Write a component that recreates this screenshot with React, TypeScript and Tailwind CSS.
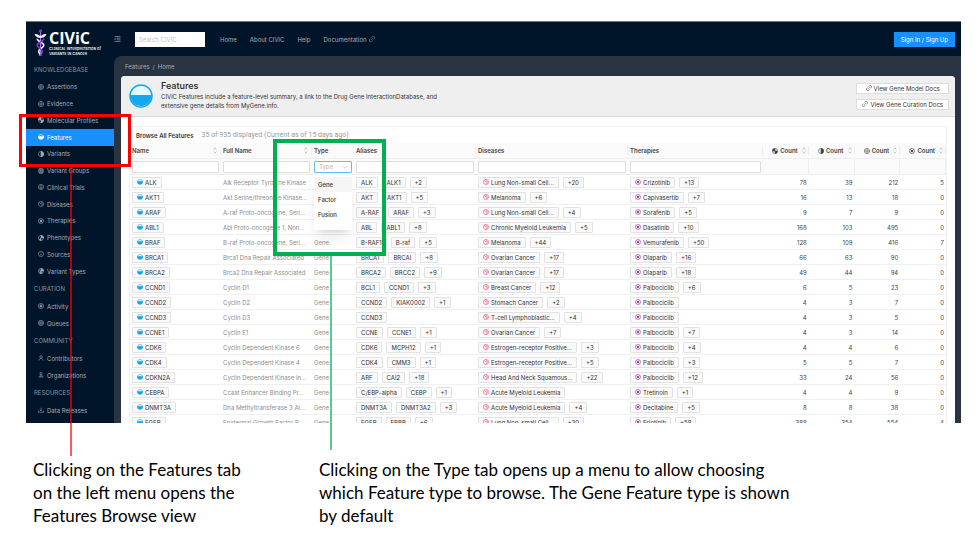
import React from "react";

type IconName =
  | "feature" | "assertion" | "evidence" | "profile" | "variant" | "group" | "trial" | "disease"
  | "therapy" | "phenotype" | "source" | "vtype" | "activity" | "queue" | "user" | "org" | "download";

const ring = <circle cx="8" cy="8" r="6.8" />;

const shapes: Record<IconName, React.ReactNode> = {
  feature: <>{ring}<path d="M1.2 6.500h13.6a6.8 6.8 0 0 1-13.6 0z" fill="currentColor" /></>,
  assertion: <>{ring}<circle cx="8" cy="8" r="3.6" /><path d="M6.4 8l1.2 1.2 2-2.4" /></>,
  evidence: <>{ring}<path d="M8 1v14M1 8h14" /></>,
  profile: <>{ring}<path d="M8 8V1.2A6.8 6.8 0 0 0 1.2 8zM8 8v6.8A6.8 6.8 0 0 0 14.8 8z" fill="currentColor" /></>,
  variant: <>{ring}<path d="M8 1.2a6.8 6.8 0 0 1 0 13.6z" fill="currentColor" /></>,
  group: <>{ring}<path d="M5 2v12M11 2v12M8 2v12" strokeWidth="2" /></>,
  trial: <>{ring}<path d="M3.5 8.5h9M5 11.5h6M5.5 5h5" /></>,
  disease: <>{ring}<path d="M8 8L4 4M8 4.5A3.5 3.5 0 0 1 8 11.500" /></>,
  therapy: <>{ring}<circle cx="8" cy="8" r="2.500" fill="currentColor" /><path d="M4 4l8 8M12 4l-8 8" strokeWidth="1.500" /></>,
  phenotype: <>{ring}<path d="M8 1.2a6.8 6.8 0 0 1 6.8 6.8H8zM8 8v6.8L3 12.5z" fill="currentColor" /></>,
  source: <>{ring}<path d="M8 4.5v1.6M8 7.5v4" strokeWidth="2" /></>,
  vtype: <>{ring}<path d="M8 1.2A6.8 6.8 0 0 1 14.8 8L8 8zM8 8l3 6-6 0.3z" fill="currentColor" /><path d="M3 5l5 3-5 3" /></>,
  activity: <>{ring}<path d="M8 4v8M4 8h8" strokeWidth="3" /></>,
  queue: <>{ring}<path d="M5.5 2v12M10.5 2v12M1.5 8h13" /></>,
  user: <><circle cx="8" cy="5" r="3.4" /><path d="M2.5 15c.5-4 2.5-6 5.500-6s5 2 5.500 6" /></>,
  org: <><circle cx="8" cy="4" r="2.800" /><path d="M3 15c0-4 2-7 5-7s5 3 5 7M6 15v-4h4v4" /></>,
  download: <><path d="M8 2v8M5 7.500l3 3 3-3M1.500 10v4h13v-4" /></>,
};

function Icon({ name, className = "" }: { name: IconName; className?: string }) {
  return (
    <svg viewBox="0 0 16 16" fill="none" stroke="currentColor" strokeWidth="1.5" aria-hidden="true"
      className={`size-[6px] shrink-0 ${className}`}>
      {shapes[name]}
    </svg>
  );
}

function LinkIcon() {
  return (
    <svg viewBox="0 0 16 16" fill="none" stroke="currentColor" strokeWidth="1.5" aria-hidden="true" className="size-[6px] shrink-0">
      <path d="M7 4l2-2a3.300 3.300 0 0 1 5 5l-2 2M9 12l-2 2a3.300 3.300 0 0 1-5-5l2-2M6 10l4-4" />
    </svg>
  );
}

function Helix() {
  return (
    <svg viewBox="0 0 14 30" fill="none" aria-hidden="true" className="h-[30px] w-[13px] shrink-0">
      <path d="M7 3v25" stroke="#a583e0" strokeWidth="1.200" />
      <circle cx="7" cy="2" r="1.800" fill="#7a35dd" />
      <path d="M0.500 5.500c3-1 4.500 1 6.500 2 2-1 3.500-3 6.500-2-1.500 3-4 4-6.500 4s-5-1-6.500-4z" fill="#efeafb" />
      <path d="M3.500 10.500c0 3.500 7 3.500 7 7s-5.500 3.500-5.500 6.500c0 2 2 2.500 2 5" stroke="#f4f1fb" strokeWidth="1.800" />
      <path d="M10.500 10.500c0 3.500-7 3.500-7 7s5.500 3.500 5.500 6.500c0 2-2 2.500-2 5" stroke="#7d3fdc" strokeWidth="1.800" />
    </svg>
  );
}

const menu: { title: string; items: [string, IconName][] }[] = [
  {
    title: "KNOWLEDGEBASE",
    items: [
      ["Assertions", "assertion"], ["Evidence", "evidence"], ["Molecular Profiles", "profile"],
      ["Features", "feature"], ["Variants", "variant"], ["Variant Groups", "group"],
      ["Clinical Trials", "trial"], ["Diseases", "disease"], ["Therapies", "therapy"],
      ["Phenotypes", "phenotype"], ["Sources", "source"], ["Variant Types", "vtype"],
    ],
  },
  { title: "CURATION", items: [["Activity", "activity"], ["Queues", "queue"]] },
  { title: "COMMUNITY", items: [["Contributors", "user"], ["Organizations", "org"]] },
  { title: "RESOURCES", items: [["Data Releases", "download"]] },
];

type Row = [string, string, string[], string[], string[], number[]];

const rows: Row[] = [
  ["ALK", "Alk Receptor Tyrosine Kinase", ["ALK", "ALK1", "+2"], ["Lung Non-small Cell...", "+20"], ["Crizotinib", "+13"], [78, 39, 212, 5]],
  ["AKT1", "Akt Serine/threonine Kinase...", ["AKT", "AKT1", "+5"], ["Melanoma", "+6"], ["Capivasertib", "+7"], [16, 13, 18, 0]],
  ["ARAF", "A-raf Proto-oncogene, Seri...", ["A-RAF", "ARAF", "+3"], ["Lung Non-small Cell...", "+4"], ["Sorafenib", "+5"], [9, 7, 9, 0]],
  ["ABL1", "Abl Proto-oncogene 1, Non...", ["ABL", "ABL1", "+8"], ["Chronic Myeloid Leukemia", "+5"], ["Dasatinib", "+10"], [168, 103, 495, 0]],
  ["BRAF", "B-raf Proto-oncogene, Seri...", ["B-RAF1", "B-raf", "+5"], ["Melanoma", "+44"], ["Vemurafenib", "+50"], [128, 109, 416, 7]],
  ["BRCA1", "Brca1 Dna Repair Associated", ["BRCA1", "BRCAI", "+8"], ["Ovarian Cancer", "+17"], ["Olaparib", "+16"], [66, 63, 90, 0]],
  ["BRCA2", "Brca2 Dna Repair Associated", ["BRCA2", "BRCC2", "+9"], ["Ovarian Cancer", "+17"], ["Olaparib", "+18"], [49, 44, 94, 0]],
  ["CCND1", "Cyclin D1", ["BCL1", "CCND1", "+3"], ["Breast Cancer", "+12"], ["Palbociclib", "+6"], [6, 5, 23, 0]],
  ["CCND2", "Cyclin D2", ["CCND2", "KIAK0002", "+1"], ["Stomach Cancer", "+2"], ["Palbociclib"], [4, 3, 7, 0]],
  ["CCND3", "Cyclin D3", ["CCND3"], ["T-cell Lymphoblastic...", "+4"], ["Palbociclib"], [4, 3, 5, 0]],
  ["CCNE1", "Cyclin E1", ["CCNE", "CCNE1", "+1"], ["Ovarian Cancer", "+7"], ["Palbociclib", "+7"], [4, 3, 14, 0]],
  ["CDK6", "Cyclin Dependent Kinase 6", ["CDK6", "MCPH12", "+1"], ["Estrogen-receptor Positive...", "+3"], ["Palbociclib", "+4"], [4, 4, 6, 0]],
  ["CDK4", "Cyclin Dependent Kinase 4", ["CDK4", "CMM3", "+1"], ["Estrogen-receptor Positive...", "+5"], ["Palbociclib", "+3"], [5, 5, 7, 0]],
  ["CDKN2A", "Cyclin Dependent Kinase In...", ["ARF", "CAI2", "+18"], ["Head And Neck Squamous...", "+22"], ["Palbociclib", "+12"], [33, 24, 56, 0]],
  ["CEBPA", "Ccaat Enhancer Binding Pr...", ["C/EBP-alpha", "CEBP", "+1"], ["Acute Myeloid Leukemia"], ["Tretinoin", "+1"], [4, 4, 9, 0]],
  ["DNMT3A", "Dna Methyltransferase 3 Al...", ["DNMT3A", "DNMT3A2", "+3"], ["Acute Myeloid Leukemia", "+4"], ["Decitabine", "+5"], [8, 8, 38, 0]],
  ["EGFR", "Epidermal Growth Factor R...", ["EGFR", "ERBB", "+6"], ["Lung Non-small Cell...", "+30"], ["Erlotinib", "+58"], [388, 354, 554, 4]],
];

function Chip({ label, icon, tone }: { label: string; icon?: IconName; tone?: string }) {
  return (
    <span className="flex h-[11px] items-center gap-[2px] rounded-[1px] border border-[#e2e2e2] bg-[#fafafa] px-1 text-[#333]">
      {icon && <Icon name={icon} className={tone} />}
      {label}
    </span>
  );
}

function Chips({ labels, icon, tone }: { labels: string[]; icon?: IconName; tone?: string }) {
  return (
    <div className="flex gap-1">
      {labels.map((l, i) => (
        <Chip key={l} label={l} icon={i === 0 ? icon : undefined} tone={tone} />
      ))}
    </div>
  );
}

function Sorter() {
  return (
    <svg viewBox="0 0 6 10" fill="none" stroke="#aaa" aria-hidden="true" className="h-[7px] w-[4px] shrink-0">
      <path d="M1 3.500l2-2.500 2 2.500M1 6.500l2 2.500 2-2.500" />
    </svg>
  );
}

const columns: { label: string; width: string; sort?: boolean }[] = [
  { label: "Name", width: "w-[91px]", sort: true },
  { label: "Full Name", width: "w-[91px]", sort: true },
  { label: "Type", width: "w-[42px]" },
  { label: "Aliases", width: "w-[122px]" },
  { label: "Diseases", width: "w-[152px]" },
  { label: "Therapies", width: "w-[135px]" },
];

const counts: IconName[] = ["profile", "variant", "evidence", "therapy"];

function TypeFilter() {
  return (
    <div className="relative">
      <select aria-label="Type" defaultValue="" className="block h-[12px] w-full appearance-none rounded-[1px] border border-[#69b9ff] bg-white px-1 leading-none text-[#b5b5b5]">
        <option value="">Type</option>
        <option>Gene</option>
        <option>Factor</option>
        <option>Fusion</option>
      </select>
      <svg viewBox="0 0 10 6" fill="none" stroke="#aaa" aria-hidden="true" className="absolute top-1 right-1 h-[4px] w-[6px]">
        <path d="M1 1l4 4 4-4" />
      </svg>
      <ul role="listbox" aria-label="Type options" className="absolute top-[13px] left-0 z-10 h-[56px] w-full bg-white pt-[3px] font-medium text-[#333] shadow-lg">
        <li role="option" aria-selected="true" className="flex h-[15px] items-center bg-[#f5f5f5] px-1">Gene</li>
        <li role="option" aria-selected="false" className="flex h-[15px] items-center px-1">Factor</li>
        <li role="option" aria-selected="false" className="flex h-[15px] items-center px-1">Fusion</li>
      </ul>
    </div>
  );
}

function FeatureTable() {
  return (
    <table className="w-full table-fixed border-separate border-spacing-0 whitespace-nowrap text-left">
      <thead className="bg-[#fafafa]">
        <tr className="h-4">
          {columns.map((c) => (
            <th key={c.label} scope="col" className={`border-b border-[#eee] pl-[2px] font-semibold text-[#444] ${c.width}`}>
              <div className="flex items-center justify-between border-r border-[#eee] pr-[3px]">
                {c.label}
                {c.sort && <Sorter />}
              </div>
            </th>
          ))}
          {counts.map((c) => (
            <th key={c} scope="col" className="border-b border-[#eee] font-semibold text-[#444]">
              <div className="flex items-center justify-end gap-[2px] border-r border-[#eee] pr-[2px]">
                <Icon name={c} />
                Count
                <span className="pl-[2px]"><Sorter /></span>
              </div>
            </th>
          ))}
        </tr>
        <tr className="h-4">
          {columns.map((c) => (
            <td key={c.label} className="border-b border-[#eee] px-[2px]">
              {c.label === "Type" ? (
                <TypeFilter />
              ) : (
                <input aria-label={`Filter ${c.label}`} className="block h-[12px] w-full rounded-[1px] border border-[#ddd] bg-white px-1" />
              )}
            </td>
          ))}
          {counts.map((c) => (
            <td key={c} className="border-r border-b border-[#eee]" />
          ))}
        </tr>
      </thead>
      <tbody>
        {rows.map(([name, full, aliases, diseases, therapies, nums]) => (
          <tr key={name} className="h-[15px]">
            <td className="border-b border-[#f0f0f0] px-[2px]"><div className="flex"><Chip label={name} icon="feature" tone="text-[#12a5ea]" /></div></td>
            <td className="border-b border-[#f0f0f0] px-[2px] text-[#8c8c8c]">{full}</td>
            <td className="border-b border-[#f0f0f0] px-[2px] text-[#8c8c8c]">Gene</td>
            <td className="border-b border-[#f0f0f0] px-[2px]"><Chips labels={aliases} /></td>
            <td className="border-b border-[#f0f0f0] px-[2px]"><Chips labels={diseases} icon="disease" tone="text-[#f0386b]" /></td>
            <td className="border-b border-[#f0f0f0] px-[2px]"><Chips labels={therapies} icon="therapy" tone="text-[#a8329c]" /></td>
            {nums.map((n, i) => (
              <td key={i} className="border-b border-[#f0f0f0] pr-[2px] text-right text-[#444]">{n}</td>
            ))}
          </tr>
        ))}
      </tbody>
    </table>
  );
}

function Sidebar() {
  return (
    <nav aria-label="Main menu" className="flex w-[88px] shrink-0 flex-col pt-1 pb-1 text-[#a6adb4]">
      {menu.map((g) => (
        <React.Fragment key={g.title}>
          <h2 className="flex flex-[10] items-center pl-2 text-[#8a939c]">{g.title}</h2>
          {g.items.map(([label, icon]) => (
            <a key={label} href="#" className={`flex flex-[9] items-center gap-[3px] pl-[12px] ${label === "Features" ? "bg-[#1890ff] text-white" : ""}`}>
              <Icon name={icon} />
              {label}
            </a>
          ))}
        </React.Fragment>
      ))}
    </nav>
  );
}

export default function App() {
  return (
    <div className="relative bg-white pt-[21px] pr-4 pb-2 pl-[26px] font-['Inter',sans-serif]">
      <div className="flex h-[402px] flex-col overflow-hidden border-t border-[#777] bg-[#001529] text-[6px] leading-[9px]">
        <header className="flex h-[34px] shrink-0 items-center pr-[6px] text-[#a6adb4]">
          <div className="flex w-[88px] items-center gap-[2px] pt-2 pl-2">
            <Helix />
            <div className="whitespace-nowrap text-white">
              <div className="font-['Open_Sans',sans-serif] text-[16px] leading-[16px] font-bold">CIViC</div>
              <div className="text-[4px] leading-[5px] font-medium [font-variant-caps:small-caps]">Clinical Interpretation of<br />Variants in Cancer</div>
            </div>
          </div>
          <button aria-label="Collapse menu">
            <svg viewBox="0 0 16 14" fill="none" stroke="currentColor" strokeWidth="1.500" className="h-[6px] w-[7px]">
              <path d="M1 1h14M6 5h9M6 9h9M1 13h14M4 5L1 7l3 2" />
            </svg>
          </button>
          <input aria-label="Search CIViC" placeholder="Search CIViC" className="ml-[14px] h-[15px] w-[70px] bg-white px-1 placeholder:text-[#bfbfbf]" />
          <nav aria-label="Site" className="flex gap-[13px] pl-[15px]">
            <a href="#">Home</a>
            <a href="#">About CIViC</a>
            <a href="#">Help</a>
            <a href="#" className="flex items-center gap-[2px]">Documentation <LinkIcon /></a>
          </nav>
          <button className="ml-auto h-[15px] bg-[#1890ff] px-[7px] text-white">Sign In / Sign Up</button>
        </header>
        <div className="flex min-h-0 flex-1">
          <Sidebar />
          <div className="flex min-w-0 flex-1 flex-col rounded-tl-lg bg-[#283442] pr-[6px] pl-[7px]">
            <div className="flex h-5 shrink-0 items-center gap-[3px] pl-1 text-[#a6adb4]">
              <a href="#">Features</a><span>/</span><a href="#">Home</a>
            </div>
            <main className="min-h-0 flex-1 overflow-hidden rounded-t bg-white">
              <div className="flex h-[41px] items-center border-b border-[#d9d9d9] bg-[#efefef] pr-[6px] pl-2">
                <svg viewBox="0 0 24 24" aria-hidden="true" className="size-[24px]">
                  <circle cx="12" cy="12" r="11" fill="#e6f8fd" stroke="#14a9ee" strokeWidth="1.500" />
                  <path d="M1 11h22a11 11 0 0 1-22 0z" fill="#14a9ee" />
                </svg>
                <div className="pb-[2px] pl-2 text-[#333]">
                  <h1 className="text-[9px] leading-[12px] font-medium text-[#222]">Features</h1>
                  <p>CIViC Features include a feature-level summary, a link to the Drug Gene InteractionDatabase, and<br />extensive gene details from MyGene.info.</p>
                </div>
                <div className="ml-auto flex flex-col gap-[5px] text-[#333]">
                  <button className="flex h-[11px] items-center justify-center gap-[2px] border border-[#ddd] bg-white px-[5px]"><LinkIcon />View Gene Model Docs</button>
                  <button className="flex h-[11px] items-center justify-center gap-[2px] border border-[#ddd] bg-white px-[5px]"><LinkIcon />View Gene Curation Docs</button>
                </div>
              </div>
              <section className="mx-2 mt-[9px] border-x border-t border-[#f2f2f2]">
                <div className="flex h-4 items-center gap-2 px-[6px]">
                  <h2 className="font-semibold text-[#333]">Browse All Features</h2>
                  <span className="font-['Roboto',sans-serif] text-[7px] text-[#999]">35 of 935 displayed (Current as of 15 days ago)</span>
                </div>
                <FeatureTable />
              </section>
            </main>
          </div>
        </div>
      </div>

      <div className="absolute top-[114px] left-[19px] h-[53px] w-[112px] border-[3px] border-[#ff0000]" />
      <div className="absolute top-[167px] left-[70px] h-[289px] w-[2px] bg-[#ff0000]/65" />
      <div className="absolute top-[139px] left-[273px] h-[117px] w-[113px] border-[4px] border-[#00b050]" />
      <div className="absolute top-[256px] left-[330px] h-[194px] w-[2px] bg-[#00b050]/65" />

      <div className="flex pt-[35px] pl-[7px] font-['Lato',sans-serif] text-[17px] leading-[23px] text-black">
        <p className="w-[286px] shrink-0">Clicking on the Features tab<br />on the left menu opens the<br />Features Browse view</p>
        <p>Clicking on the Type tab opens up a menu to allow choosing<br />which Feature type to browse. The Gene Feature type is shown<br />by default</p>
      </div>
    </div>
  );
}
